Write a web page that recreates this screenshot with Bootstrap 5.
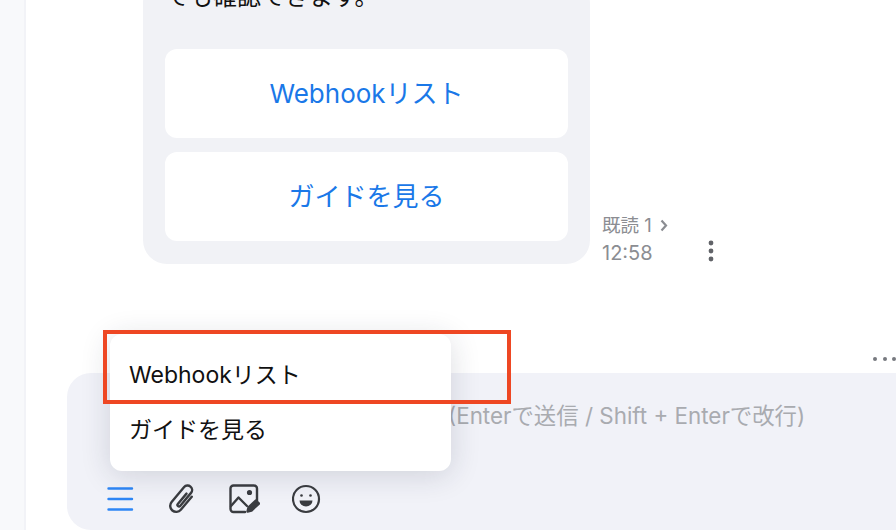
<!DOCTYPE html>
<html lang="ja">
<head>
  <meta charset="UTF-8" />
  <meta name="viewport" content="width=device-width, initial-scale=1.0"/>
  <title>Webhookリスト</title>
  <link rel="stylesheet" href="https://cdn.jsdelivr.net/npm/bootstrap@5.3.2/dist/css/bootstrap.min.css" />
  <style>
    html, body {
      height: 530px;
      overflow: hidden;
    }
    body {
      background: #fff;
      font-family: Inter, "Noto Sans CJK JP", sans-serif;
      color: #111;
    }
    .side-rail {
      width: 26px;
      background: #f8f9fb;
      border-right: 2px solid #f2f3f7;
    }
    .chat-main {
      height: 530px;
      min-width: 0;
    }
    .msg-row {
      margin-top: -21px;
      padding-left: 117px;
    }
    .msg-bubble {
      width: 447px;
      background: #f1f2f6;
      border-radius: 24px;
      padding: 0 22px 23px;
    }
    .msg-text {
      font-size: 24px;
      line-height: 36px;
      margin-bottom: 34px;
    }
    .msg-btn {
      height: 89px;
      border: 0;
      border-radius: 12px;
      background: #fff;
      color: #1a78e8;
      font-size: 26px;
    }
    .msg-btns {
      gap: 14px;
    }
    .msg-meta {
      color: #8b8d92;
      margin-left: 12px;
      margin-bottom: -1px;
    }
    .meta-read {
      font-size: 18.5px;
      line-height: 22px;
      margin-bottom: 5px;
    }
    .meta-time {
      font-size: 20px;
      line-height: 24px;
      margin-bottom: 0;
    }
    .kebab {
      margin-left: 40px;
      margin-bottom: 1px;
    }
    .more-row {
      height: 109px;
      padding-bottom: 11px;
    }
    .composer {
      flex: 1;
      margin-left: 41px;
      margin-right: -40px;
      background: #f1f2f8;
      border-radius: 24px 0 0 24px;
      padding: 28px 40px 0 40px;
    }
    .composer-hint {
      color: #a9abb0;
      font-size: 22.4px;
      line-height: 30px;
      height: 82px;
      padding-left: 341px;
      white-space: nowrap;
    }
    .tool-icons {
      gap: 32px;
    }
    .menu-pop {
      display: block;
      position: absolute;
      left: 84px;
      top: 334px;
      width: 341px;
      height: 137px;
      padding: 14px 0 0;
      border: 0;
      border-radius: 12px;
      box-shadow: 0 4px 30px rgba(30, 35, 60, .16);
      z-index: 5;
    }
    .menu-pop .dropdown-item {
      height: 55px;
      padding: 0 19px;
      font-size: 23px;
      line-height: 55px;
      color: #111;
    }
    .red-mark {
      position: absolute;
      left: 77px;
      top: 330px;
      width: 408px;
      height: 74px;
      border: 4px solid #ee4723;
      z-index: 6;
    }
  </style>
</head>
<body class="d-flex">

  <div class="side-rail flex-shrink-0"></div>

  <div class="chat-main flex-grow-1 d-flex flex-column position-relative">

    <!-- メッセージ -->
    <div class="msg-row d-flex align-items-end">
      <div class="msg-bubble flex-shrink-0">
        <p class="msg-text">でも確認できます。</p>
        <div class="d-grid msg-btns">
          <button type="button" class="btn msg-btn">Webhookリスト</button>
          <button type="button" class="btn msg-btn">ガイドを見る</button>
        </div>
      </div>
      <div class="msg-meta">
        <p class="meta-read d-flex align-items-center gap-2">既読 1
          <svg width="8" height="13" viewBox="0 0 8 13"><path d="M1.500 1.500 6 6.500 1.500 11.500" fill="none" stroke="#8b8d92" stroke-width="2.200"/></svg>
        </p>
        <p class="meta-time">12:58</p>
      </div>
      <svg class="kebab" width="6" height="24" viewBox="0 0 6 24" fill="#616368">
        <circle cx="3" cy="4" r="2.4"/><circle cx="3" cy="12" r="2.4"/><circle cx="3" cy="20" r="2.4"/>
      </svg>
    </div>

    <div class="more-row d-flex justify-content-end align-items-end flex-shrink-0">
      <svg width="24" height="6" viewBox="0 0 24 6" fill="#77797f">
        <circle cx="3" cy="3" r="2"/><circle cx="13" cy="3" r="2"/><circle cx="22" cy="3" r="2"/>
      </svg>
    </div>

    <!-- 入力欄 -->
    <div class="composer">
      <div class="composer-hint">(Enterで送信 / Shift + Enterで改行)</div>
      <div class="tool-icons d-flex align-items-center">
        <svg width="28" height="26" viewBox="0 0 28 26" fill="none" stroke="#2e86f5" stroke-width="2.400" stroke-linecap="round">
          <path d="M1.500 2.500H25M1.500 13H25M1.500 23.500H25"/>
        </svg>
        <svg width="30" height="32" viewBox="0 0 30 32" fill="none" stroke="#3a3c40" stroke-width="2.400" stroke-linecap="round" stroke-linejoin="round">
          <path transform="rotate(40 15 16)" d="M21 8V25a6 6 0 0 1-12 0V5.500a4.500 4.500 0 0 1 9 0V22.500a1.500 1.500 0 0 1-3 0V9"/>
        </svg>
        <svg width="31" height="30" viewBox="0 0 31 30" fill="none" stroke="#3a3c40" stroke-width="2.400" stroke-linecap="round" stroke-linejoin="round">
          <path d="M16 28H4.500A3 3 0 0 1 1.500 25V4.500A3 3 0 0 1 4.500 1.500H25A3 3 0 0 1 28 4.500V17"/>
          <path d="M2 22 9.500 13.500 18 22"/>
          <circle cx="20.500" cy="8.500" r="1.400" fill="#3a3c40"/>
          <path d="M18.500 27.500 19.500 23.500 27 16.500 30 19.500 22.500 26.500Z" fill="#3a3c40"/>
        </svg>
        <svg width="29" height="30" viewBox="0 0 29 30" fill="none" stroke="#3a3c40" stroke-width="2.200" stroke-linecap="round">
          <circle cx="14" cy="15" r="13"/>
          <circle cx="9.500" cy="11.500" r="1.300" fill="#3a3c40" stroke="none"/>
          <circle cx="18.500" cy="11.500" r="1.300" fill="#3a3c40" stroke="none"/>
          <path d="M7.500 16.500H20.500A6.500 6 0 0 1 7.500 16.500Z" fill="#3a3c40" stroke="none"/>
        </svg>
      </div>
    </div>

    <!-- メニュー -->
    <div class="dropdown-menu menu-pop">
      <a class="dropdown-item" href="#">Webhookリスト</a>
      <a class="dropdown-item" href="#">ガイドを見る</a>
    </div>
    <div class="red-mark"></div>
  </div>

  <script src="https://cdn.jsdelivr.net/npm/bootstrap@5.3.2/dist/js/bootstrap.bundle.min.js"></script>
</body>
</html>
